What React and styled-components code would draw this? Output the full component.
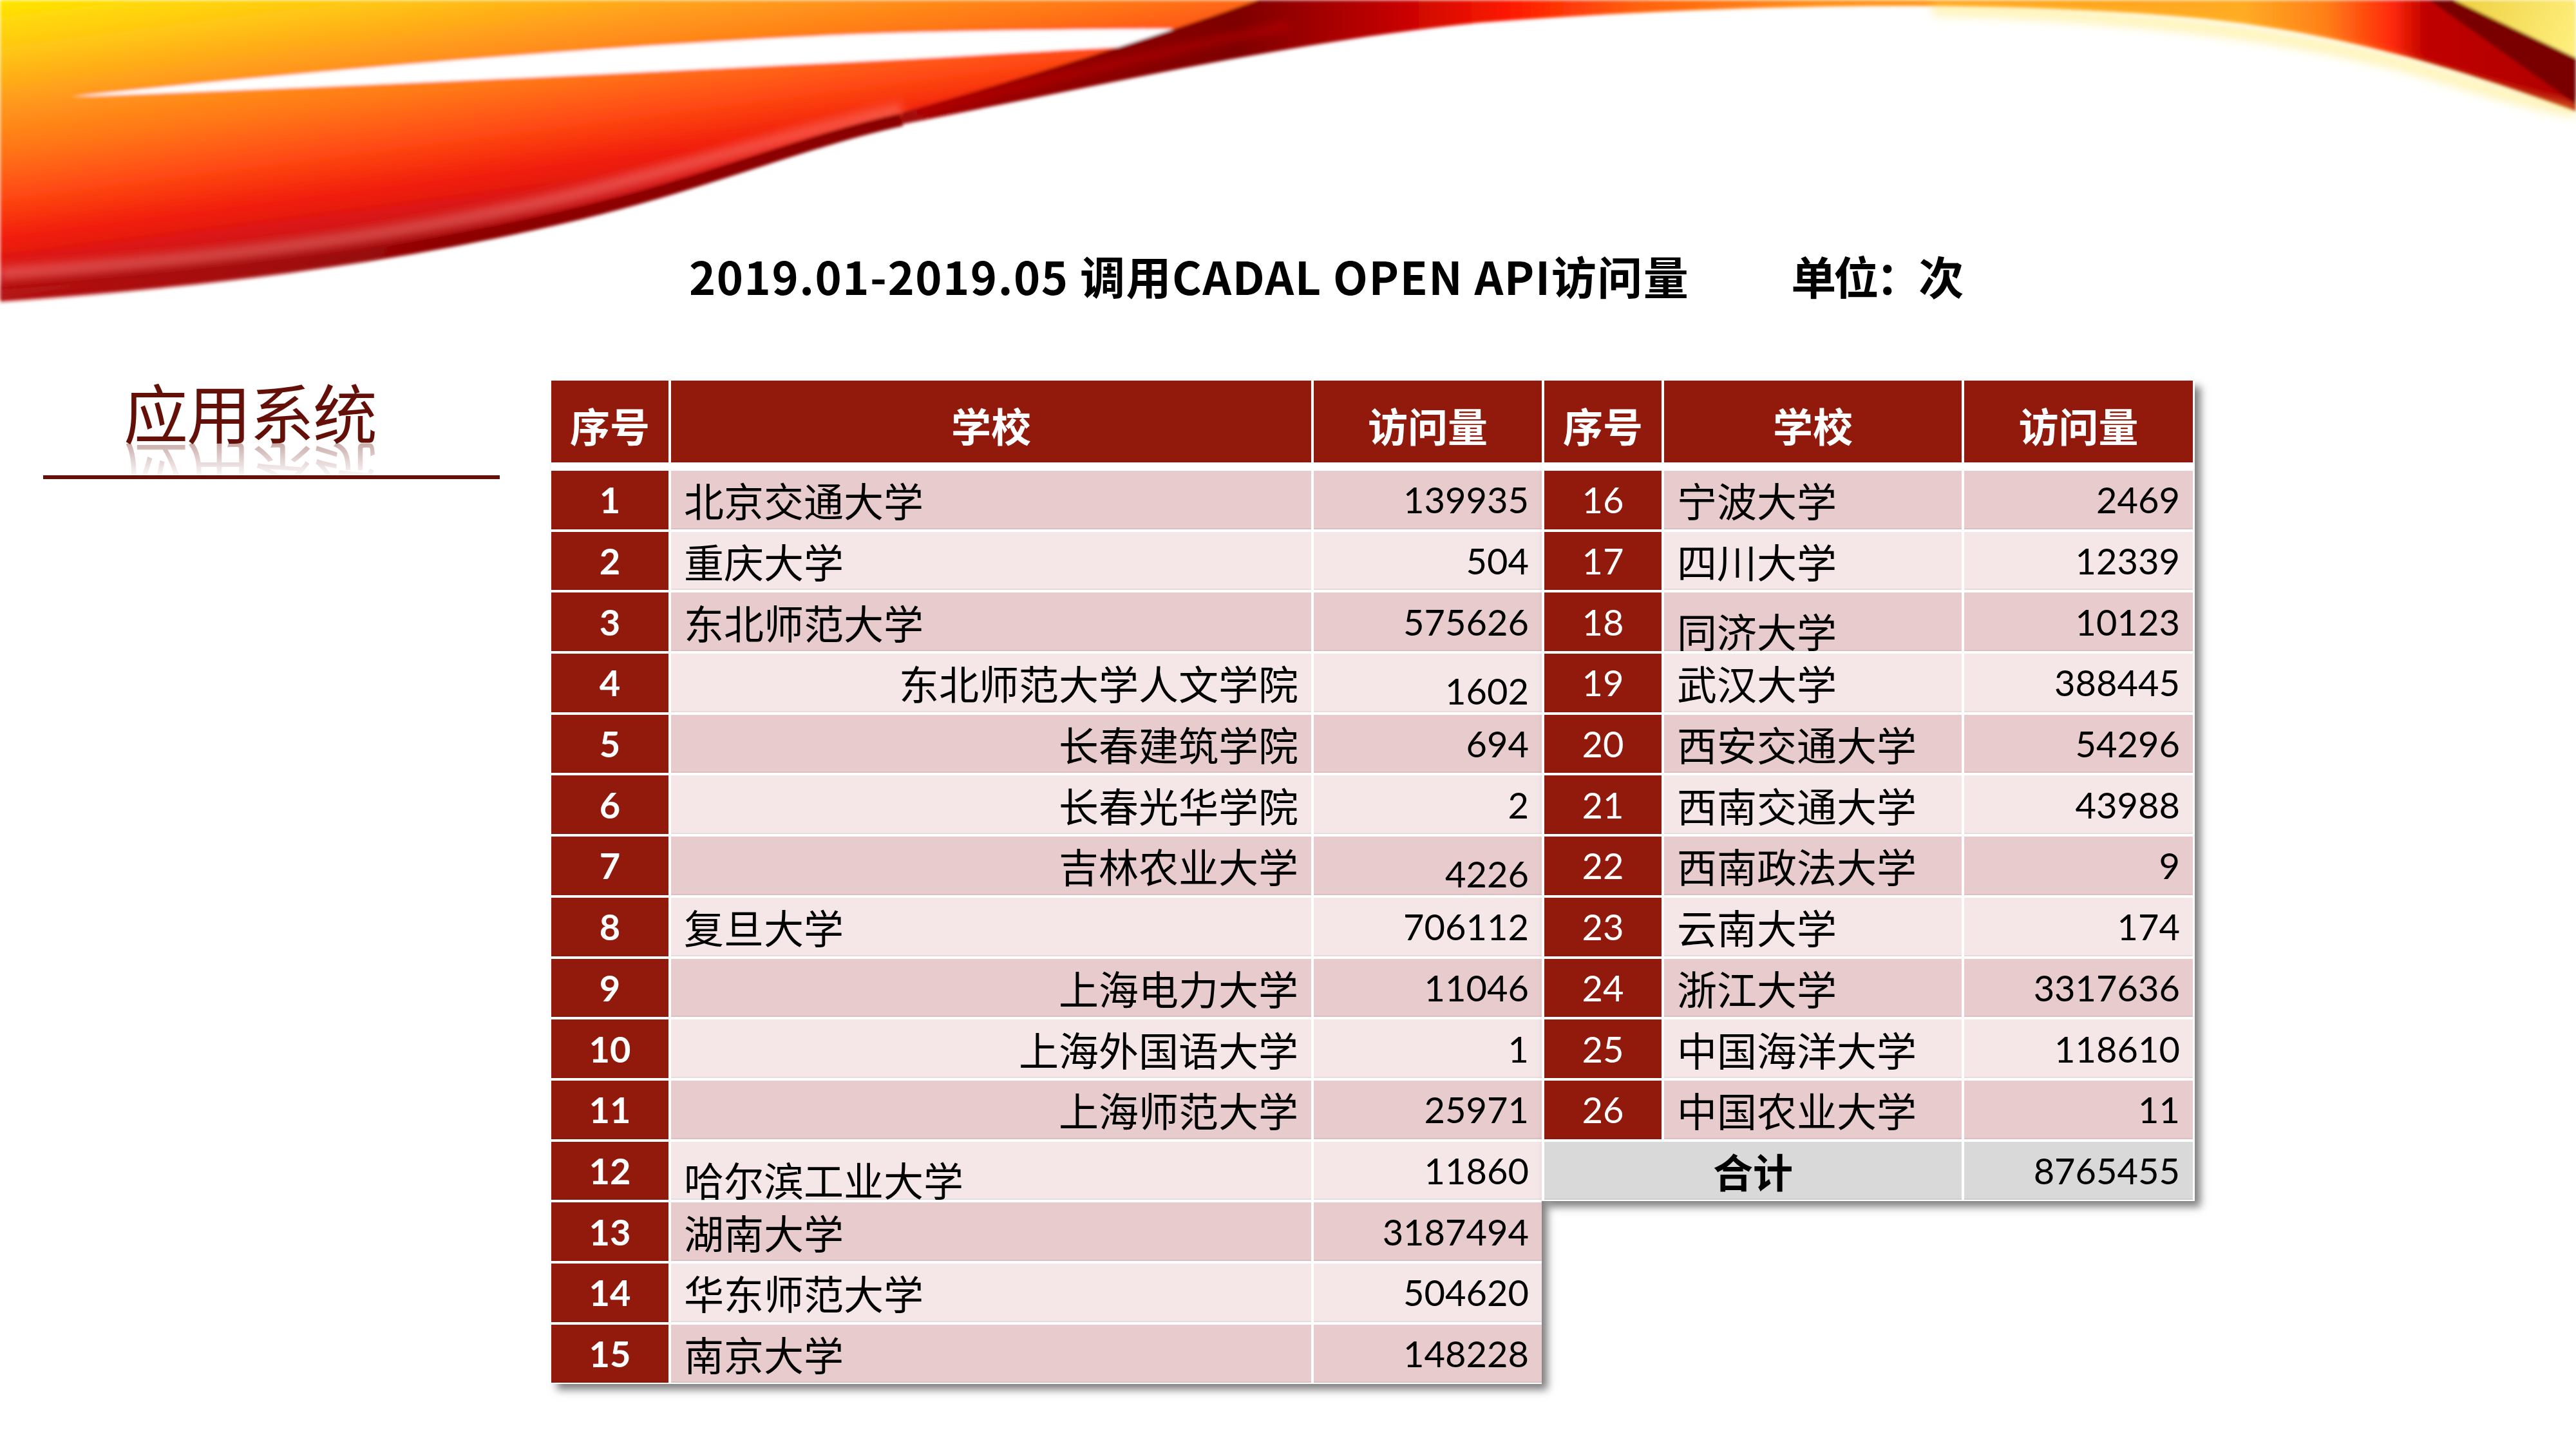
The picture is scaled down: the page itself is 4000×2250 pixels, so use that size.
import React from "react";
import styled, { createGlobalStyle } from "styled-components";

const GlobalStyle = createGlobalStyle`
  html, body {
    margin: 0;
    padding: 0;
    background: #fff;
  }
  #root {
    width: 4000px;
    height: 2250px;
  }
`;

const RED = "#921a0c";
const PINK = "#e8cbcc";
const BLUSH = "#f5e7e7";
const GREY = "#d9d9d9";
const CJK = `"Noto Sans CJK SC", "Noto Sans", sans-serif`;
const NUM = `Lato, "Noto Sans CJK SC", sans-serif`;

const Slide = styled.div`
  position: relative;
  width: 4000px;
  height: 2250px;
  overflow: hidden;
  background: #fff;
  font-family: ${CJK};
`;

const Ribbon = styled.svg`
  position: absolute;
  top: 0;
  left: 0;
  width: 4000px;
  height: 500px;
`;

const Content = styled.div`
  position: relative;
`;

const Title = styled.h1`
  margin: 0;
  padding: 386px 0 0 1070px;
  display: flex;
  gap: 158px;
  font: 700 70px/84px ${CJK};
  color: #000;
  white-space: nowrap;
`;

const Caption = styled.span`
  letter-spacing: 1.5px;
`;

const Unit = styled.span`
  letter-spacing: -4px;
`;

const Body = styled.div`
  display: flex;
  align-items: flex-start;
  margin-top: 121px;
`;

const Side = styled.div`
  flex: none;
  width: 709px;
  margin: 0 80px 0 67px;
`;

const Heading = styled.h2`
  margin: -3px 0 0 125px;
  font: 400 100px/1 ${CJK};
  color: #641008;
  letter-spacing: -2px;
  -webkit-box-reflect: below 0 linear-gradient(transparent 45%, rgba(0, 0, 0, 0.35));
`;

const Rule = styled.div`
  height: 6px;
  margin-top: 50px;
  background: #641008;
`;

const Sheet = styled.div`
  position: relative;
  z-index: ${p => p.$layer || 0};
  flex: none;
  display: grid;
  grid-template-columns: ${p => p.$cols};
  grid-template-rows: 136px;
  grid-auto-rows: 90.7px;
  gap: 4px;
  padding: ${p => p.$pad};
  background: #fff;
  box-shadow: 9px 9px 12px rgba(0, 0, 0, 0.5);
`;

const Cell = styled.div`
  display: flex;
  align-items: center;
  justify-content: ${p => p.$align || "flex-start"};
  padding: ${p => (p.$low ? "26px 20px 0" : "0 20px")};
  background: ${p => p.$bg};
  color: #000;
  font: 400 62px/1 ${CJK};
  white-space: nowrap;
  box-shadow: inset 0 -2px 0 rgba(0, 0, 0, 0.05);
`;

const HeadCell = styled(Cell)`
  justify-content: center;
  margin-bottom: 9px;
  padding-top: 10px;
  background: ${RED};
  color: #fff;
  font-weight: 700;
`;

const SeqCell = styled(Cell)`
  justify-content: center;
  background: ${RED};
  color: #fff;
  font: ${p => (p.$bold ? 700 : 400)} 56px/1 ${NUM};
`;

const CountCell = styled(Cell)`
  justify-content: flex-end;
  font: 400 56px/1 ${NUM};
`;

const TotalLabel = styled(Cell)`
  grid-column: span 2;
  justify-content: center;
  background: ${GREY};
  font-weight: 700;
`;

const LEFT = [
  { n: 1, name: "北京交通大学", count: "139935" },
  { n: 2, name: "重庆大学", count: "504" },
  { n: 3, name: "东北师范大学", count: "575626" },
  { n: 4, name: "东北师范大学人文学院", count: "1602", right: true, countLow: true },
  { n: 5, name: "长春建筑学院", count: "694", right: true },
  { n: 6, name: "长春光华学院", count: "2", right: true },
  { n: 7, name: "吉林农业大学", count: "4226", right: true, countLow: true },
  { n: 8, name: "复旦大学", count: "706112" },
  { n: 9, name: "上海电力大学", count: "11046", right: true },
  { n: 10, name: "上海外国语大学", count: "1", right: true },
  { n: 11, name: "上海师范大学", count: "25971", right: true },
  { n: 12, name: "哈尔滨工业大学", count: "11860", nameLow: true },
  { n: 13, name: "湖南大学", count: "3187494" },
  { n: 14, name: "华东师范大学", count: "504620" },
  { n: 15, name: "南京大学", count: "148228" }
];

const RIGHT = [
  { n: 16, name: "宁波大学", count: "2469" },
  { n: 17, name: "四川大学", count: "12339" },
  { n: 18, name: "同济大学", count: "10123", nameLow: true },
  { n: 19, name: "武汉大学", count: "388445" },
  { n: 20, name: "西安交通大学", count: "54296" },
  { n: 21, name: "西南交通大学", count: "43988" },
  { n: 22, name: "西南政法大学", count: "9" },
  { n: 23, name: "云南大学", count: "174" },
  { n: 24, name: "浙江大学", count: "3317636" },
  { n: 25, name: "中国海洋大学", count: "118610" },
  { n: 26, name: "中国农业大学", count: "11" }
];

const Header = () => (
  <>
    <HeadCell>序号</HeadCell>
    <HeadCell>学校</HeadCell>
    <HeadCell>访问量</HeadCell>
  </>
);

const Rows = ({ rows, bold }) =>
  rows.map((r, i) => {
    const bg = i % 2 === 0 ? PINK : BLUSH;
    return (
      <React.Fragment key={r.n}>
        <SeqCell $bold={bold}>{r.n}</SeqCell>
        <Cell $bg={bg} $align={r.right ? "flex-end" : "flex-start"} $low={r.nameLow}>
          {r.name}
        </Cell>
        <CountCell $bg={bg} $low={r.countLow}>
          {r.count}
        </CountCell>
      </React.Fragment>
    );
  });

// swooshing ribbon across the top of the slide
const RibbonArt = () => (
  <Ribbon viewBox="0 0 4000 500" preserveAspectRatio="none">
    <defs>
      <linearGradient id="body" gradientUnits="userSpaceOnUse" x1="0" y1="0" x2="60" y2="460">
        <stop offset="0" stopColor="#ffe600" />
        <stop offset="0.18" stopColor="#ffc414" />
        <stop offset="0.34" stopColor="#ff9a1c" />
        <stop offset="0.5" stopColor="#ff7616" />
        <stop offset="0.65" stopColor="#ff4a12" />
        <stop offset="0.8" stopColor="#f01c0c" />
        <stop offset="0.9" stopColor="#d41616" />
        <stop offset="1" stopColor="#9a0808" />
      </linearGradient>
      <linearGradient id="band" gradientUnits="userSpaceOnUse" x1="1400" y1="0" x2="4000" y2="0">
        <stop offset="0" stopColor="#a00808" />
        <stop offset="0.2" stopColor="#7e0000" />
        <stop offset="0.29" stopColor="#c00000" />
        <stop offset="0.365" stopColor="#ff1a00" />
        <stop offset="0.44" stopColor="#ff6210" />
        <stop offset="0.54" stopColor="#ff8c14" />
        <stop offset="0.69" stopColor="#ffa21c" />
        <stop offset="0.8" stopColor="#ffac24" />
        <stop offset="0.85" stopColor="#ff8018" />
        <stop offset="0.89" stopColor="#ff2a0a" />
        <stop offset="0.91" stopColor="#c00000" />
        <stop offset="1" stopColor="#b00000" />
      </linearGradient>
      <linearGradient id="edge" gradientUnits="userSpaceOnUse" x1="0" y1="0" x2="1400" y2="0">
        <stop offset="0" stopColor="#c41a1a" stopOpacity="0.5" />
        <stop offset="0.5" stopColor="#8e0303" />
        <stop offset="1" stopColor="#8a0000" />
      </linearGradient>
      <linearGradient id="gold" gradientUnits="userSpaceOnUse" x1="3810" y1="0" x2="4000" y2="90">
        <stop offset="0" stopColor="#eed040" />
        <stop offset="1" stopColor="#fff080" />
      </linearGradient>
      <filter id="soft" x="-5%" y="-20%" width="110%" height="140%">
        <feGaussianBlur stdDeviation="2.5" />
      </filter>
      <filter id="softer" x="-5%" y="-20%" width="110%" height="140%">
        <feGaussianBlur stdDeviation="7" />
      </filter>
    </defs>
    <g filter="url(#soft)">
      <path
        d="M0,0 H2100 L2100,52 C1900,80 1650,140 1400,193 C1250,225 1100,290 900,338 C600,410 300,445 0,467 Z"
        fill="url(#body)"
      />
      <path
        d="M0,425 C300,405 600,372 880,305 C1050,262 1200,215 1400,170"
        fill="none"
        stroke="#ffb0a8"
        strokeOpacity="0.35"
        strokeWidth="20"
        filter="url(#softer)"
      />
      <path
        d="M110,150 C600,98 1100,60 1400,51 C1600,46 1750,45 1840,45 L1740,73 C1600,80 1500,87 1400,92 C1000,112 600,132 110,150 Z"
        fill="#fff"
      />
      <path
        d="M0,460 C300,438 600,403 900,331 C1100,283 1250,218 1400,186"
        fill="none"
        stroke="url(#edge)"
        strokeWidth="20"
      />
      <path
        d="M1954,0 H4000 V173 C3850,120 3650,50 3400,27 C3100,0 2700,5 2300,35 C2000,65 1700,135 1400,193 L1400,175 C1600,118 1800,55 1954,0 Z"
        fill="url(#band)"
      />
      <path
        d="M2000,40 C1800,80 1600,130 1420,176"
        fill="none"
        stroke="#e01010"
        strokeOpacity="0.55"
        strokeWidth="8"
        filter="url(#softer)"
      />
      <path
        d="M3000,14 C3300,22 3550,50 3750,105 C3850,135 3930,160 4000,172"
        fill="none"
        stroke="#ffe45a"
        strokeOpacity="0.4"
        strokeWidth="22"
        filter="url(#softer)"
      />
      <polygon points="3772,0 3810,0 4000,90 4000,162" fill="#7a0000" />
      <polygon points="3810,0 4000,0 4000,90" fill="url(#gold)" />
    </g>
  </Ribbon>
);

export default function App() {
  return (
    <Slide>
      <GlobalStyle />
      <RibbonArt />
      <Content>
        <Title>
          <Caption>2019.01-2019.05 调用CADAL OPEN API访问量</Caption>
          <Unit>单位：次</Unit>
        </Title>
        <Body>
          <Side>
            <Heading>应用系统</Heading>
            <Rule />
          </Side>
          <Sheet $cols="182px 994px 354px" $pad="0 0 2px 0">
            <Header />
            <Rows rows={LEFT} bold />
          </Sheet>
          <Sheet $cols="182px 462px 355px" $pad="0 3px 2px 4px" $layer={1}>
            <Header />
            <Rows rows={RIGHT} />
            <TotalLabel $bg={GREY}>合计</TotalLabel>
            <CountCell $bg={GREY}>8765455</CountCell>
          </Sheet>
        </Body>
      </Content>
    </Slide>
  );
}
